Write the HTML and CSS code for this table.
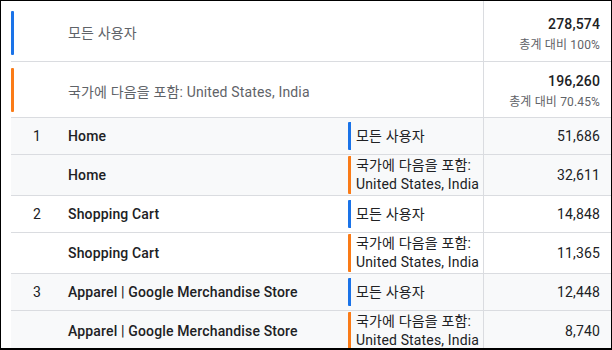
FILE: index.html
```html
<!DOCTYPE html>
<html lang="ko">
<head>
<meta charset="utf-8">
<link rel="stylesheet" href="styles.css">
</head>
<body>
<div class="frame">
  <div class="table">
    <div class="row head head1">
      <div class="head-label"><span class="hbar blue"></span><span class="hl-text">모든 사용자</span></div>
      <div class="value"><div class="num strong">278,574</div><div class="sub">총계 대비 100%</div></div>
    </div>
    <div class="row head head2">
      <div class="head-label"><span class="hbar orange"></span><span class="hl-text">국가에 다음을 포함: United States, India</span></div>
      <div class="value"><div class="num strong">196,260</div><div class="sub">총계 대비 70.45%</div></div>
    </div>

    <div class="row body shade">
      <div class="title"><span class="idx">1</span><span class="name">Home</span></div>
      <div class="seg"><div class="segin blue">모든 사용자</div></div>
      <div class="value"><div class="num">51,686</div></div>
    </div>
    <div class="row body shade">
      <div class="title"><span class="idx"></span><span class="name">Home</span></div>
      <div class="seg"><div class="segin orange">국가에 다음을 포함:<br>United States, India</div></div>
      <div class="value"><div class="num">32,611</div></div>
    </div>

    <div class="row body">
      <div class="title"><span class="idx">2</span><span class="name">Shopping Cart</span></div>
      <div class="seg"><div class="segin blue">모든 사용자</div></div>
      <div class="value"><div class="num">14,848</div></div>
    </div>
    <div class="row body">
      <div class="title"><span class="idx"></span><span class="name">Shopping Cart</span></div>
      <div class="seg"><div class="segin orange">국가에 다음을 포함:<br>United States, India</div></div>
      <div class="value"><div class="num">11,365</div></div>
    </div>

    <div class="row body shade">
      <div class="title"><span class="idx">3</span><span class="name">Apparel | Google Merchandise Store</span></div>
      <div class="seg"><div class="segin blue">모든 사용자</div></div>
      <div class="value"><div class="num">12,448</div></div>
    </div>
    <div class="row body shade">
      <div class="title"><span class="idx"></span><span class="name">Apparel | Google Merchandise Store</span></div>
      <div class="seg"><div class="segin orange">국가에 다음을 포함:<br>United States, India</div></div>
      <div class="value"><div class="num">8,740</div></div>
    </div>
  </div>
</div>
</body>
</html>
```
FILE: styles.css
```css
html, body {
  margin: 0;
  padding: 0;
  background: #fff;
}
body {
  font-family: Roboto, "Noto Sans CJK KR", sans-serif;
  color: #202124;
  letter-spacing: 0.15px;
}
.frame {
  width: 612px;
  height: 350px;
  box-sizing: border-box;
  border: 1px solid #000;
  border-bottom-width: 2px;
  overflow: hidden;
  padding-left: 10px;
}
.table {
  display: flex;
  flex-direction: column;
}
.row {
  display: grid;
  grid-template-columns: 337px 135px 1fr;
  border-bottom: 1px solid #dadce0;
}
.row.head {
  grid-template-columns: 472px 1fr;
}
.row.head1 {
  height: 60px;
}
.row.head2 {
  height: 55px;
}
.shade {
  background: #f8f9fa;
}
.head-label {
  display: flex;
  align-items: center;
  font-size: 14px;
  color: #5f6368;
}
.hbar {
  width: 3px;
  height: 44px;
  border-radius: 1px;
  flex: none;
}
.head1 .hbar { margin-top: 4px; }
.head2 .hbar { margin-top: 1px; }
.hbar.blue { background: #1a73e8; }
.hbar.orange { background: #fa7b17; }
.hl-text {
  margin-left: 54px;
  margin-top: 2px;
}
.value {
  border-left: 1px solid #dadce0;
  display: flex;
  flex-direction: column;
  justify-content: center;
  align-items: flex-end;
  padding-right: 11px;
}
.head1 .value { padding-top: 7px; }
.head2 .value { padding-top: 3px; }
.num {
  font-size: 14px;
  line-height: 20px;
}
.num.strong {
  font-weight: 500;
}
.sub {
  font-size: 12px;
  color: #5f6368;
  line-height: 20px;
  margin-top: 1px;
}
.body {
  min-height: 36px;
}
.title {
  display: flex;
  align-items: center;
  font-size: 14px;
  font-weight: 500;
}
.idx {
  width: 30px;
  text-align: right;
  font-weight: 400;
  flex: none;
}
.name {
  margin-left: 27px;
}
.seg {
  display: flex;
  align-items: center;
  padding: 1px 0;
}
.segin {
  font-size: 14px;
  line-height: 19px;
  padding-left: 5px;
  min-height: 28px;
  display: flex;
  align-items: center;
  border-left: 3px solid;
  border-radius: 1px;
}
.segin.blue { border-color: #1a73e8; }
.segin.orange { border-color: #fa7b17; }
```
